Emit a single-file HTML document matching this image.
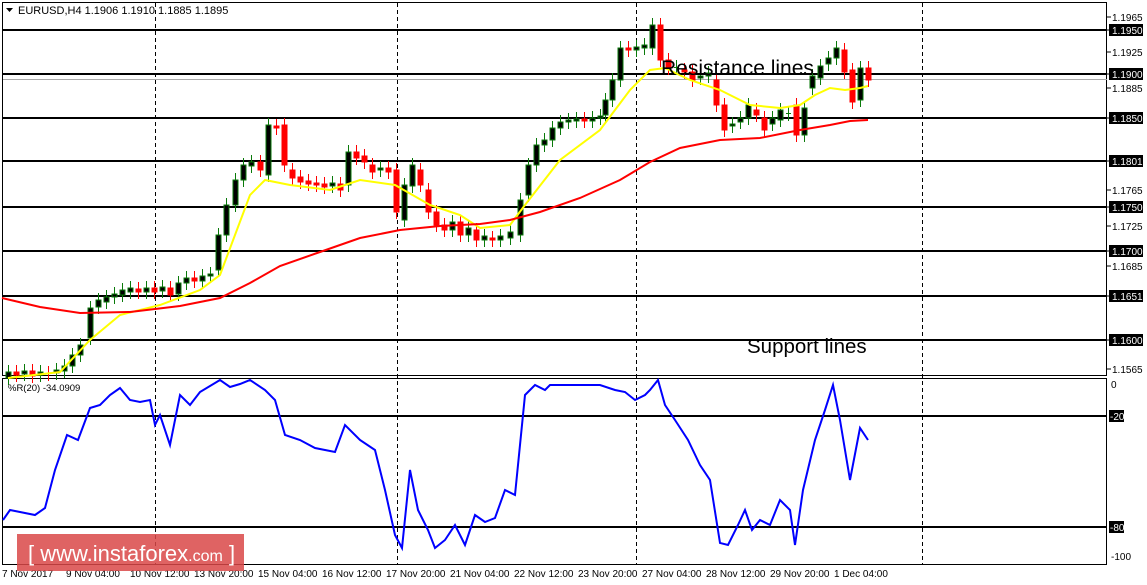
<!DOCTYPE html>
<html><head><meta charset="utf-8"><style>
html,body{margin:0;padding:0;background:#fff;width:1147px;height:585px;overflow:hidden}
svg{display:block;font-family:"Liberation Sans",sans-serif}
</style></head><body>
<svg id="s" width="1147" height="585" xmlns="http://www.w3.org/2000/svg">
<rect width="1147" height="585" fill="#fff"/>
<rect x="2.5" y="2.5" width="1104" height="373" fill="none" stroke="#000"/>
<rect x="2.5" y="378.5" width="1104" height="186" fill="none" stroke="#000"/>
<g stroke="#000" stroke-dasharray="4,3">
<line x1="155.5" y1="3" x2="155.5" y2="564"/><line x1="397.5" y1="3" x2="397.5" y2="564"/>
<line x1="636.5" y1="3" x2="636.5" y2="564"/><line x1="922.5" y1="3" x2="922.5" y2="564"/>
</g>
<line x1="3" y1="79.5" x2="1107" y2="79.5" stroke="#aaa"/>
<g stroke="#000" stroke-width="2">
<line x1="3" y1="30" x2="1107" y2="30"/><line x1="3" y1="74" x2="1107" y2="74"/>
<line x1="3" y1="118" x2="1107" y2="118"/><line x1="3" y1="161" x2="1107" y2="161"/>
<line x1="3" y1="207" x2="1107" y2="207"/><line x1="3" y1="251" x2="1107" y2="251"/>
<line x1="3" y1="296" x2="1107" y2="296"/><line x1="3" y1="340" x2="1107" y2="340"/>
<line x1="3" y1="416" x2="1107" y2="416"/><line x1="3" y1="527" x2="1107" y2="527"/>
</g>
<g id="candles"></g>
<polyline fill="none" stroke="#ffff00" stroke-width="2" points="8,378 60,372 90,340 120,315 160,305 200,290 220,275 235,235 250,195 265,180 290,185 330,190 360,180 395,185 430,205 460,215 480,228 510,225 525,205 560,160 600,130 615,110 630,90 650,70 665,68 690,80 720,90 750,105 780,108 800,105 815,95 830,88 845,90 860,88 868,86"/>
<polyline fill="none" stroke="#ff0000" stroke-width="2" points="2,298 40,307 80,313 130,312 180,306 220,298 250,283 280,266 320,252 360,238 400,230 440,226 480,224 510,220 540,212 580,198 620,180 650,162 680,148 720,140 760,138 800,130 830,125 850,121 868,120"/>
<polyline fill="none" stroke="#0000ff" stroke-width="2" points="3,520 10,510 20,512 35,515 45,508 55,470 67,435 78,440 90,408 100,405 110,395 120,388 130,400 140,402 150,400 155,425 160,415 170,445 180,395 190,405 200,392 220,380 230,387 240,384 250,380 265,390 275,400 285,435 300,440 315,448 335,452 345,425 360,440 375,450 385,490 395,535 402,548 410,470 418,510 428,530 435,548 445,540 455,525 465,545 475,515 485,522 495,518 505,490 515,495 525,395 535,385 545,390 550,385 580,385 600,385 615,390 625,392 635,400 645,395 650,390 658,380 665,405 675,420 688,440 700,465 710,480 720,543 728,545 738,525 745,510 752,530 760,520 770,525 780,500 790,510 795,545 803,490 815,440 825,410 833,385 840,420 850,480 860,428 868,440"/>
<path d="M6 8 h7 l-3.5 4z" fill="#000"/>
<text x="18" y="14" font-size="11" fill="#000">EURUSD,H4  1.1906 1.1910 1.1885 1.1895</text>
<text x="8" y="391" font-size="9.5" fill="#000">%R(20) -34.0909</text>
<text x="661" y="75" font-size="21" fill="#000">Resistance lines</text>
<text x="747" y="353" font-size="20.5" fill="#000">Support lines</text>
<g id="axis" font-size="10" fill="#000"></g>
<g font-size="10" fill="#000">
<text x="2" y="577">7 Nov 2017</text><text x="66" y="577">9 Nov 04:00</text><text x="130" y="577">10 Nov 12:00</text>
<text x="194" y="577">13 Nov 20:00</text><text x="258" y="577">15 Nov 04:00</text><text x="322" y="577">16 Nov 12:00</text>
<text x="386" y="577">17 Nov 20:00</text><text x="450" y="577">21 Nov 04:00</text><text x="514" y="577">22 Nov 12:00</text>
<text x="578" y="577">23 Nov 20:00</text><text x="642" y="577">27 Nov 04:00</text><text x="706" y="577">28 Nov 12:00</text>
<text x="770" y="577">29 Nov 20:00</text><text x="834" y="577">1 Dec 04:00</text>
</g>
<rect x="17" y="534" width="227" height="37" fill="#d94848" opacity="0.85"/>
<text x="28" y="561" font-size="22" fill="#fff">[  www.instaforex<tspan font-size="16">.com</tspan> ]</text>
</svg>
<script>
var N="http://www.w3.org/2000/svg";
function el(t,a,p){var e=document.createElementNS(N,t);for(var k in a)e.setAttribute(k,a[k]);p.appendChild(e);return e;}
var C=[[8,378,372],[16,372,375],[24,374,371],[32,371,376],[40,375,372],[48,373,374],[56,373,370],[64,371,366],[72,366,355],[80,355,345],[90,338,308],[98,307,300],[106,302,297],[114,297,294],[122,295,290],[130,292,288],[138,289,292],[146,292,288],[154,288,292],[162,291,287],[170,288,295],[178,294,283],[186,283,278],[194,278,281],[202,281,276],[210,276,274],[218,270,235],[226,235,205],[235,205,180],[243,180,165],[251,166,162],[260,162,170],[268,175,125],[276,126,128],[284,125,165],[292,170,178],[300,177,182],[308,181,184],[316,183,185],[324,184,187],[332,186,183],[340,184,190],[348,185,152],[356,152,158],[364,156,162],[372,165,172],[380,170,168],[388,168,172],[396,170,212],[404,220,185],[412,186,165],[420,170,185],[428,190,212],[436,212,225],[444,225,230],[452,230,222],[460,222,235],[468,235,228],[476,230,240],[484,240,236],[492,238,240],[500,240,236],[510,238,232],[520,235,200],[528,195,165],[536,165,145],[544,145,140],[552,140,128],[560,128,122],[568,122,120],[576,121,119],[584,119,121],[592,121,118],[600,118,116],[605,115,100],[612,100,80],[620,80,48],[628,48,50],[636,50,47],[644,48,45],[652,48,25],[660,25,60],[668,60,68],[676,68,67],[684,70,72],[692,72,80],[700,78,76],[708,76,73],[716,80,105],[724,105,130],[732,126,124],[740,122,118],[748,118,105],[756,110,115],[764,118,130],[772,124,118],[780,120,110],[788,114,113],[796,105,135],[804,135,108],[812,88,76],[820,78,66],[828,64,58],[836,58,48],[844,50,72],[852,70,102],[860,100,68],[868,68,80]];
var g=document.getElementById("candles");
C.forEach(function(c){var x=c[0],o=c[1],cl=c[2],t=Math.min(o,cl),b=Math.max(o,cl),bull=cl<o;
var col=bull?"#0a7a0a":"#ff0000";
el("line",{x1:x+.5,y1:t-7,x2:x+.5,y2:b+7,stroke:col},g);
if(b-t<2){el("line",{x1:x-2,y1:t+.5,x2:x+3,y2:t+.5,stroke:col},g);}
else el("rect",{x:x-2,y:t,width:5,height:b-t,fill:bull?"#000":"#ff0000",stroke:col,"stroke-width":1},g);});
var a=document.getElementById("axis");
function tick(y,txt,box){el("line",{x1:1107,y1:y,x2:1111,y2:y,stroke:"#000"},a);
if(box)el("rect",{x:1109,y:y-6,width:34,height:12,fill:"#000"},a);
var t=el("text",{x:1112,y:y+4,fill:box?"#fff":"#000"},a);t.textContent=txt;}
[[17,"1.1965"],[52,"1.1925"],[88,"1.1885"],[190,"1.1765"],[226,"1.1725"],[266,"1.1685"],[369,"1.1565"]].forEach(function(v){tick(v[0],v[1],false)});
[[30,"1.1950"],[74,"1.1900"],[118,"1.1850"],[161,"1.1801"],[207,"1.1750"],[251,"1.1700"],[296,"1.1651"],[340,"1.1600"]].forEach(function(v){tick(v[0],v[1],true)});
var z=el("text",{x:1111,y:388,fill:"#000"},a);z.textContent="0";
el("rect",{x:1109,y:410,width:15,height:12,fill:"#000"},a);var t1=el("text",{x:1110,y:420,fill:"#fff"},a);t1.textContent="-20";
el("rect",{x:1109,y:521,width:15,height:12,fill:"#000"},a);var t2=el("text",{x:1110,y:531,fill:"#fff"},a);t2.textContent="-80";
var t3=el("text",{x:1111,y:560,fill:"#000"},a);t3.textContent="-100";
</script>
</body></html>
